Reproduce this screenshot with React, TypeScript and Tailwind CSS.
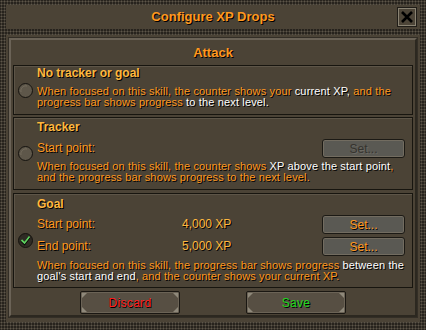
import React from "react";

const sh = "[text-shadow:1px_1px_0_#000]";
const OR = "text-[#ff981f]";
const HL = "text-[#ffb83f]";
const WH = "text-white";
const DESC = "text-[11px] leading-[11px] tracking-[0.15px] whitespace-nowrap";

function Radio({ checked }: { checked?: boolean }) {
  return (
    <svg width="15" height="15" viewBox="0 0 15 15" className="shrink-0">
      <circle cx="7.5" cy="7.5" r="7" fill={checked ? "#2f2b24" : "#5e574a"} stroke="#15130f" strokeWidth="1" />
      {!checked && <path d="M3 9 A5 5 0 0 1 9 3" stroke="#756d5e" strokeWidth="1" fill="none" />}
      {checked && <path d="M3.5 7.5 L6.5 10.5 L11.5 4" stroke="#000" strokeWidth="2.6" fill="none" />}
      {checked && <path d="M3.5 7 L6.5 10 L11.5 3.5" stroke="#5fcf5f" strokeWidth="1.8" fill="none" />}
    </svg>
  );
}

function SetBtn({ disabled }: { disabled?: boolean }) {
  return (
    <div
      className={`w-[83px] h-[19px] flex items-center justify-center rounded-[3px] border border-[#1c1a15] bg-[#5a5953] shadow-[inset_0_0_0_1px_#726c60] text-[12px] leading-none ${
        disabled ? "text-[#35332e] [text-shadow:1px_1px_0_#6b6a63]" : `${OR} ${sh}`
      }`}
    >
      Set...
    </div>
  );
}

function Corner({ pos }: { pos: string }) {
  return <span className={`absolute w-[5px] h-[5px] bg-[#8f897b] ${pos}`} />;
}

function BigBtn({ label, color }: { label: string; color: string }) {
  return (
    <div className="relative w-[100px] h-[23px] flex items-center justify-center rounded-[2px] border border-[#1a1712] bg-[#574f43] shadow-[inset_0_0_0_1px_#6b6356]">
      <Corner pos="top-[1px] left-[1px] [clip-path:polygon(0_0,100%_0,0_100%)]" />
      <Corner pos="top-[1px] right-[1px] [clip-path:polygon(0_0,100%_0,100%_100%)]" />
      <Corner pos="bottom-[1px] left-[1px] [clip-path:polygon(0_0,100%_100%,0_100%)]" />
      <Corner pos="bottom-[1px] right-[1px] [clip-path:polygon(100%_0,100%_100%,0_100%)]" />
      <span className={`text-[12px] leading-none tracking-[0.3px] ${color} ${sh}`}>{label}</span>
    </div>
  );
}

function Box({ h, pt, children, checked }: { h: string; pt: string; children: React.ReactNode; checked?: boolean }) {
  return (
    <div className={`${h} flex items-center border border-[#17150f] shadow-[inset_1px_1px_0_#5d5548] pl-[4px]`}>
      <Radio checked={checked} />
      <div className={`ml-[4px] self-stretch flex flex-col ${pt}`}>{children}</div>
    </div>
  );
}

export default function App() {
  return (
    <div className="w-[426px] h-[330px] overflow-hidden flex flex-col pt-[5px] pb-[8px] px-[6px] bg-[#27231d] bg-[radial-gradient(circle,#5d5649_0.8px,transparent_1.2px)] bg-[length:3px_3px] font-['Liberation_Sans',sans-serif]">
      <div className="h-[24px] shrink-0 bg-[#4b4336] relative flex items-center justify-center">
        <span className={`text-[13px] font-bold ${OR} ${sh}`}>Configure XP Drops</span>
        <div className="absolute right-[3px] top-[2px] w-[20px] h-[20px] border border-[#1f1c17] shadow-[inset_0_0_0_1px_#8a8373] bg-[#4d4538] flex items-center justify-center">
          <svg width="14" height="14" viewBox="0 0 14 14">
            <path d="M2 2 L12 12 M12 2 L2 12" stroke="#000" strokeWidth="2.6" />
          </svg>
        </div>
      </div>
      <div className="h-[6px] shrink-0" />
      <div className="flex-1 bg-[#4b4336] px-[3px] pt-[3px] pb-[5px]">
        <div className="h-full border-2 border-t-[#6b6357] border-l-[#6b6357] border-r-[#2c2820] border-b-[#2c2820] shadow-[0_0_0_1px_#332e26] flex flex-col px-[2px]">
          <div className="h-[25px] shrink-0 flex items-center justify-center">
            <span className={`text-[13px] font-bold ${OR} ${sh}`}>Attack</span>
          </div>

          <div className={`flex flex-col ${sh}`}>
            <Box h="h-[50px]" pt="pt-0">
              <div className={`text-[12px] font-bold leading-[14px] ${HL}`}>No tracker or goal</div>
              <div className={`mt-[6px] ${DESC} ${OR}`}>
                When focused on this skill, the counter shows your <span className={WH}>current XP,</span> and the
                <br />
                progress bar shows progress <span className={WH}>to the next level.</span>
              </div>
            </Box>

            <div className="mt-[2px]">
              <Box h="h-[73px]" pt="pt-[2px]">
                <div className={`text-[12px] font-bold leading-[14px] ${HL}`}>Tracker</div>
                <div className="mt-[5px] h-[20px] flex items-start">
                  <div className={`w-[285px] text-[12px] leading-[19px] ${OR}`}>Start point:</div>
                  <SetBtn disabled />
                </div>
                <div className={`mt-[2px] ${DESC} ${OR}`}>
                  When focused on this skill, the counter shows <span className={WH}>XP above the start point</span>,
                  <br />
                  and the progress bar shows progress to the next level.
                </div>
              </Box>
            </div>

            <div className="mt-[3px]">
              <Box h="h-[95px]" pt="pt-[3px]" checked>
                <div className={`text-[12px] font-bold leading-[14px] ${HL}`}>Goal</div>
                <div className="mt-[4px] h-[20px] flex items-start">
                  <div className={`w-[145px] text-[12px] leading-[19px] ${OR}`}>Start point:</div>
                  <div className={`w-[140px] text-[12px] leading-[19px] ${HL}`}>4,000 XP</div>
                  <SetBtn />
                </div>
                <div className="mt-[2px] h-[20px] flex items-start">
                  <div className={`w-[145px] text-[12px] leading-[19px] ${OR}`}>End point:</div>
                  <div className={`w-[140px] text-[12px] leading-[19px] ${HL}`}>5,000 XP</div>
                  <SetBtn />
                </div>
                <div className={`mt-[3px] ${DESC} ${OR}`}>
                  When focused on this skill, the progress bar shows progress <span className={WH}>between the</span>
                  <br />
                  <span className={WH}>goal's start and end</span>, and the counter shows your current XP.
                </div>
              </Box>
            </div>
          </div>

          <div className="mt-[3px] flex pl-[67px] gap-[66px]">
            <BigBtn label="Discard" color="text-[#ff1a1a]" />
            <BigBtn label="Save" color="text-[#1ed81e]" />
          </div>
        </div>
      </div>
    </div>
  );
}
